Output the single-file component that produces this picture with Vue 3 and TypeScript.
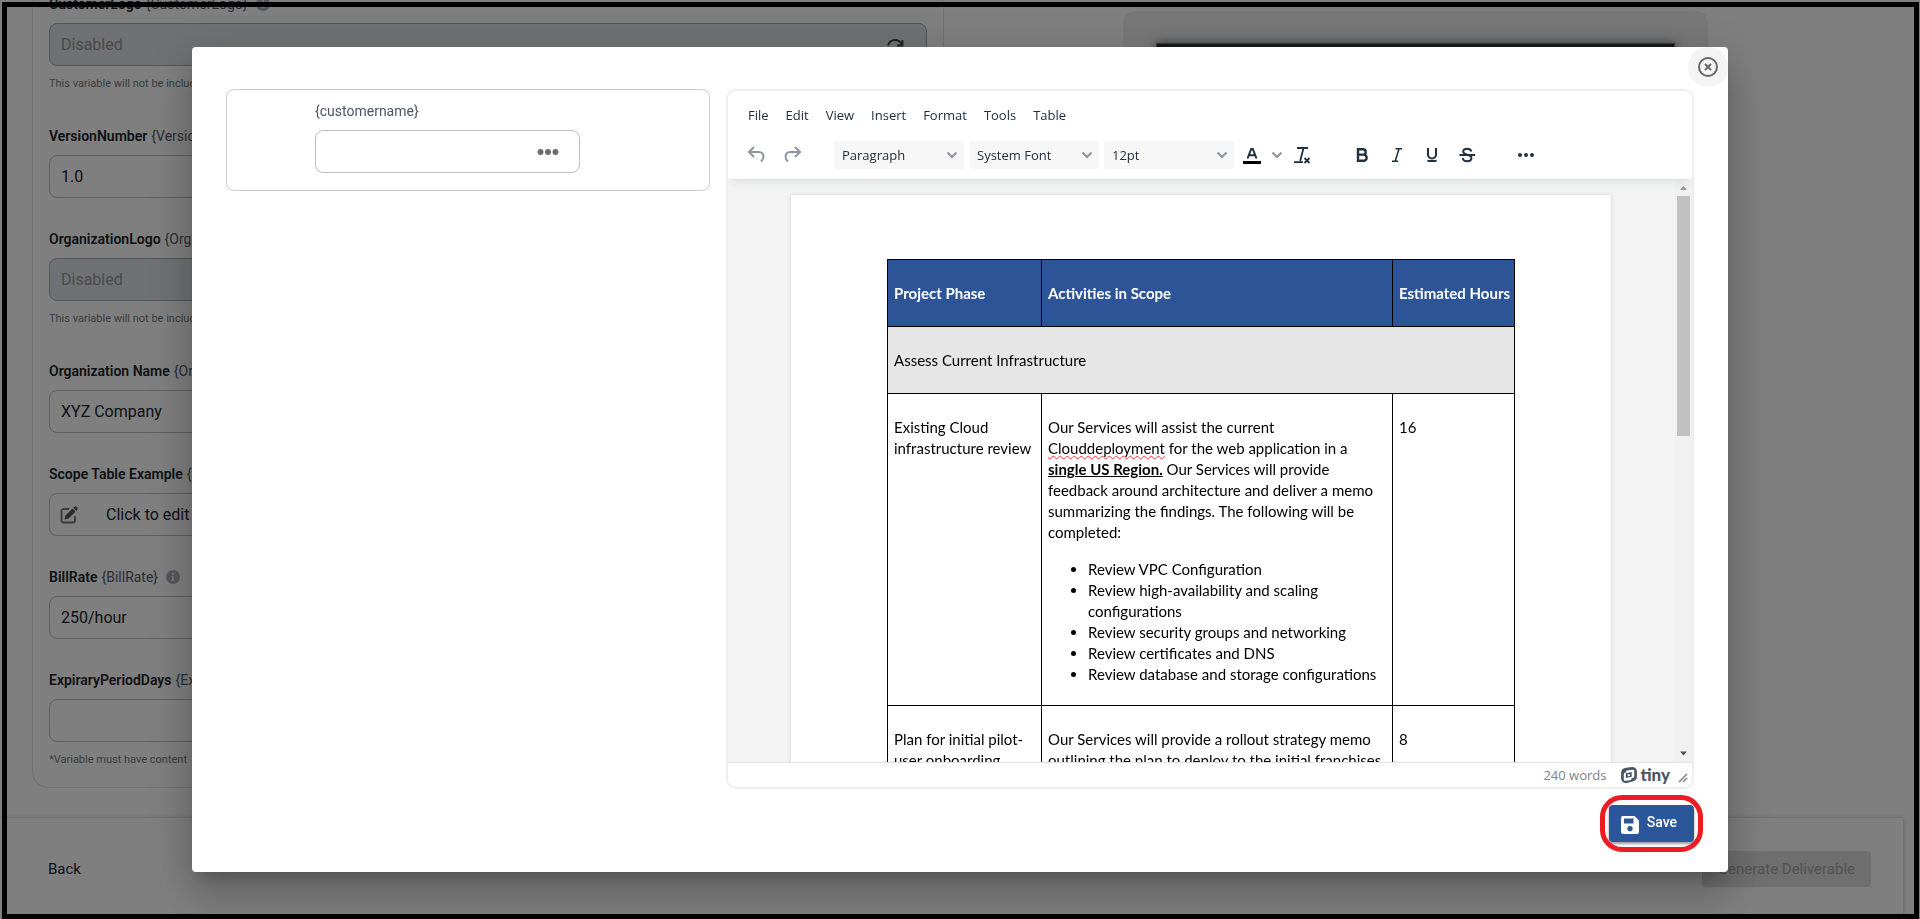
<script setup lang="ts">
import { ref } from 'vue'

interface Field {
  id: string
  name: string
  token: string
  value: string
  info?: boolean
  disabled?: boolean
  editor?: boolean
  note?: string
}

const unused = 'This variable will not be included in the document'

const fields = ref<Field[]>([
  { id: 'customer-logo', name: 'CustomerLogo', token: '{CustomerLogo}', value: 'Disabled', disabled: true, info: true, note: unused },
  { id: 'version', name: 'VersionNumber', token: '{VersionNumber}', value: '1.0' },
  { id: 'org-logo', name: 'OrganizationLogo', token: '{OrganizationLogo}', value: 'Disabled', disabled: true, note: unused },
  { id: 'org-name', name: 'Organization Name', token: '{OrganizationName}', value: 'XYZ Company' },
  { id: 'scope', name: 'Scope Table Example', token: '{ScopeTable}', value: 'Click to edit', editor: true },
  { id: 'bill-rate', name: 'BillRate', token: '{BillRate}', value: '250/hour', info: true },
  { id: 'expiry', name: 'ExpiraryPeriodDays', token: '{ExpiraryPeriodDays}', value: '', note: '*Variable must have content' },
])

const customerName = ref('')
const menus = ['File', 'Edit', 'View', 'Insert', 'Format', 'Tools', 'Table']
const selects = [
  { label: 'Block format', value: 'Paragraph' },
  { label: 'Font', value: 'System Font' },
  { label: 'Font size', value: '12pt' },
]
const reviews = [
  'Review VPC Configuration',
  'Review high-availability and scaling configurations',
  'Review security groups and networking',
  'Review certificates and DNS',
  'Review database and storage configurations',
]
</script>

<template>
  <div class="page">
    <main class="content">
      <form class="card">
        <div v-for="f in fields" :key="f.id" class="field">
          <label class="field-label" :for="f.id">
            <b>{{ f.name }}</b> <span>{{ f.token }}</span>
            <svg v-if="f.info" class="info" viewBox="0 0 14 14" aria-hidden="true">
              <circle cx="7" cy="7" r="7" fill="#a9b1ba" />
              <path d="M6 3h2v2H6zM5 6h3v4h1v1H5v-1h1V7H5z" fill="#e4e7ea" />
            </svg>
          </label>
          <button v-if="f.editor" :id="f.id" type="button" class="box edit-box">
            <svg width="18" height="18" viewBox="0 0 18 18" aria-hidden="true">
              <path d="M9 3H3.500a2 2 0 0 0-2 2v9.500a2 2 0 0 0 2 2H13a2 2 0 0 0 2-2V10" fill="none" stroke="#777" stroke-width="1.800" />
              <path d="M4.500 13.500l1-4 7-7 3 3-7 7zM13.300 1.700l1-1a1.500 1.500 0 0 1 2 0l1 1a1.500 1.500 0 0 1 0 2l-1 1z" fill="#555" />
            </svg>
            <span>{{ f.value }}</span>
          </button>
          <div v-else class="box" :class="{ off: f.disabled }">
            <input :id="f.id" v-model="f.value" type="text" :disabled="f.disabled" />
            <svg v-if="f.disabled" class="redo" width="18" height="18" viewBox="0 0 18 18" aria-hidden="true">
              <path d="M2 9.500C3 6 6 4 9 4c3 0 5.500 1.500 7 4.500M16.500 4v5.500H11" fill="none" stroke="#444" stroke-width="1.800" />
            </svg>
          </div>
          <p v-if="f.note" class="note">{{ f.note }}</p>
        </div>
      </form>
      <section class="preview"><div class="sheet"></div></section>
    </main>
    <footer class="footer">
      <button type="button">Back</button>
      <button type="button" class="generate" disabled>Generate Deliverable</button>
    </footer>
  </div>

  <div class="overlay">
    <div class="modal" role="dialog" aria-modal="true" aria-label="Edit variable content">
      <button type="button" class="close" aria-label="Close">
        <svg width="20" height="20" viewBox="0 0 20 20" aria-hidden="true">
          <circle cx="10" cy="10" r="9" fill="none" stroke="#666" stroke-width="2" />
          <path d="M7 7l6 6M13 7l-6 6" stroke="#666" stroke-width="2" />
        </svg>
      </button>

      <div class="columns">
        <section class="variables">
          <div class="variable">
            <label for="customername">{customername}</label>
            <div class="box">
              <input id="customername" v-model="customerName" type="text" />
              <button type="button" class="more" aria-label="More options">
                <svg width="22" height="6" viewBox="0 0 22 6" aria-hidden="true">
                  <g fill="#6e6e6e"><circle cx="3.500" cy="3" r="3" /><circle cx="11" cy="3" r="3" /><circle cx="18.500" cy="3" r="3" /></g>
                </svg>
              </button>
            </div>
          </div>
        </section>

        <section class="editor">
          <header class="tools">
            <nav class="menubar">
              <button v-for="m in menus" :key="m" type="button">{{ m }}</button>
            </nav>
            <div class="toolbar">
              <button type="button" class="tool history" aria-label="Undo">
                <svg width="24" height="24" viewBox="0 0 24 24"><path d="M9 4L4 9l5 5M4.500 9H14a4.500 4.500 0 0 1 4.500 4.500c0 2-.8 3.500-2.500 5" fill="none" stroke="currentColor" stroke-width="2" /></svg>
              </button>
              <button type="button" class="tool history redo-tool" aria-label="Redo">
                <svg width="24" height="24" viewBox="0 0 24 24"><path d="M14 4l5 5-5 5M18.500 9H9a4.500 4.500 0 0 0-4.500 4.500c0 2 .8 3.500 2.500 5" fill="none" stroke="currentColor" stroke-width="2" /></svg>
              </button>
              <div class="selects">
                <div v-for="s in selects" :key="s.label" class="select">
                  <select :aria-label="s.label"><option>{{ s.value }}</option></select>
                  <svg width="12" height="8" viewBox="0 0 12 8" aria-hidden="true"><path d="M1.500 1.500L6 6l4.500-4.500" fill="none" stroke="#8e959e" stroke-width="2" /></svg>
                </div>
              </div>
              <button type="button" class="tool" aria-label="Text color">
                <svg width="24" height="24" viewBox="0 0 24 24"><path d="M3 18h18v3H3z" fill="#000" /><path d="M7.500 15.500L11.200 6h1.600l3.700 9.500M9 12.300h6" fill="none" stroke="currentColor" stroke-width="2" /></svg>
              </button>
              <button type="button" class="arrow" aria-label="Text color menu">
                <svg width="12" height="8" viewBox="0 0 12 8"><path d="M1.500 1.500L6 6l4.500-4.500" fill="none" stroke="#8e959e" stroke-width="2" /></svg>
              </button>
              <button type="button" class="tool" aria-label="Clear formatting">
                <svg width="24" height="24" viewBox="0 0 24 24"><path d="M7 5h11M13.500 5l-3.300 13M4 19.200h9M14.500 15l5 5M19.500 15l-5 5" fill="none" stroke="currentColor" stroke-width="1.800" /></svg>
              </button>
              <div class="styles">
                <button type="button" class="tool" aria-label="Bold">
                  <svg width="24" height="24" viewBox="0 0 24 24"><path d="M8 6.200h5a2.700 2.700 0 0 1 0 5.400H8zM8 11.600h5.600a3 3 0 0 1 0 6.100H8z" fill="none" stroke="currentColor" stroke-width="2.400" /></svg>
                </button>
                <button type="button" class="tool" aria-label="Italic">
                  <svg width="24" height="24" viewBox="0 0 24 24"><path d="M10.500 5.700H17M7 18.300h6M14 5.700l-3.800 12.600" fill="none" stroke="currentColor" stroke-width="1.500" /></svg>
                </button>
                <button type="button" class="tool" aria-label="Underline">
                  <svg width="24" height="24" viewBox="0 0 24 24"><path d="M8 5v6.500a4 4 0 0 0 8 0V5M7.500 18h9" fill="none" stroke="currentColor" stroke-width="2" /></svg>
                </button>
                <button type="button" class="tool" aria-label="Strikethrough">
                  <svg width="24" height="24" viewBox="0 0 24 24"><path d="M16.200 8.500C16 6.500 14.300 5.700 12.200 5.700c-2.500 0-4 1.100-4 2.900 0 1.700 1.500 2.500 4 3.100 2.700.6 4.200 1.400 4.200 3.300 0 2-1.700 3.200-4.200 3.200-2.700 0-4.300-1.100-4.400-3.200M4.500 12h15.500" fill="none" stroke="currentColor" stroke-width="2" /></svg>
                </button>
              </div>
              <button type="button" class="tool" aria-label="More tools">
                <svg width="24" height="24" viewBox="0 0 24 24"><g fill="currentColor"><circle cx="6" cy="12" r="2" /><circle cx="12" cy="12" r="2" /><circle cx="18" cy="12" r="2" /></g></svg>
              </button>
            </div>
          </header>

          <div class="canvas">
            <div class="viewport">
              <article class="paper">
                <table class="scope">
                  <colgroup><col class="c1" /><col class="c2" /><col class="c3" /></colgroup>
                  <thead>
                    <tr><th>Project Phase</th><th>Activities in Scope</th><th>Estimated Hours</th></tr>
                  </thead>
                  <tbody>
                    <tr class="phase"><td colspan="3"><p>Assess Current Infrastructure</p></td></tr>
                    <tr>
                      <td><p>Existing Cloud infrastructure review</p></td>
                      <td>
                        <p>Our Services will assist the current <span class="typo">Clouddeployment</span> for the web application in a <b><u>single US Region.</u></b> Our Services will provide feedback around architecture and deliver a memo summarizing the findings. The following will be completed:</p>
                        <ul><li v-for="r in reviews" :key="r">{{ r }}</li></ul>
                      </td>
                      <td><p>16</p></td>
                    </tr>
                    <tr>
                      <td><p>Plan for initial pilot-user onboarding</p></td>
                      <td><p>Our Services will provide a rollout strategy memo outlining the plan to deploy to the initial franchises</p></td>
                      <td><p>8</p></td>
                    </tr>
                  </tbody>
                </table>
              </article>
            </div>
            <div class="scrollbar" aria-hidden="true">
              <svg width="17" height="17" viewBox="0 0 17 17"><path d="M5 11l3.500-4 3.500 4z" fill="#9a9a9a" /></svg>
              <div class="thumb"></div>
              <svg width="17" height="17" viewBox="0 0 17 17"><path d="M5 6.500l3.500 4 3.500-4z" fill="#505050" /></svg>
            </div>
          </div>

          <footer class="status">
            <span class="words">240 words</span>
            <span class="brand">
              <svg width="16" height="16" viewBox="0 0 16 16" aria-hidden="true">
                <path fill-rule="evenodd" d="M5 .8l6-.7a4.500 4.500 0 0 1 4.900 4v5.400a5 5 0 0 1-4.200 5L5.500 15.900A4.500 4.500 0 0 1 .1 11.500V6A5 5 0 0 1 5 .8zM6 3.500L11.500 2.700a1.500 1.500 0 0 1 1.800 1.500V9a2 2 0 0 1-1.500 2l-1.300.3v.5a1.500 1.500 0 0 1-1.300 1.400l-4.600.6a1.500 1.500 0 0 1-1.800-1.500V7.500a2 2 0 0 1 1.500-2L5 5.300v-.6A1.300 1.300 0 0 1 6 3.500z" fill="#4a5562" />
                <path fill-rule="evenodd" d="M4.800 6.200l5.900-1.200v4.700l-5.900 1.200zM6.800 7l2 .2V9l-2 .2z" fill="#4a5562" />
              </svg>
              <b>tiny</b>
            </span>
            <svg class="grip" width="10" height="10" viewBox="0 0 10 10" aria-hidden="true"><path d="M1 9l8-8M5 9l4-4" stroke="#7a828c" stroke-width="1.500" /></svg>
          </footer>
        </section>
      </div>

      <div class="actions">
        <div class="save-wrap">
          <button type="button" class="save">
            <svg width="18" height="18" viewBox="0 0 18 18" aria-hidden="true">
              <path fill-rule="evenodd" d="M2 0h11.500L18 4.500V16a2 2 0 0 1-2 2H2a2 2 0 0 1-2-2V2a2 2 0 0 1 2-2zM3 2.500v5h9.500v-5zM9 10a2.700 2.700 0 1 0 .01 0z" fill="#fff" />
            </svg>
            <span>Save</span>
          </button>
        </div>
      </div>
    </div>
  </div>
  <div class="frame" aria-hidden="true"></div>
</template>

<style>
html,
body {
  margin: 0;
  overflow: hidden;
}
</style>

<style scoped>
* {
  box-sizing: border-box;
}
button,
input,
select {
  font: inherit;
  color: inherit;
  margin: 0;
  padding: 0;
  border: 0;
  background: none;
  outline: none;
}
svg {
  display: block;
  flex: none;
}
.page {
  height: 100vh;
  display: flex;
  flex-direction: column;
  font-family: Roboto, "Liberation Sans", sans-serif;
  color: #212529;
  background: #fff;
}
.content {
  flex: 1;
  min-height: 0;
  display: flex;
  align-items: flex-start;
  padding: 0 212px 0 32px;
}
.card {
  flex: 0 1 912px;
  margin: -16px 179px 0 0;
  padding: 0 16px 16px;
  border: 1px solid #e0e0e0;
  border-radius: 16px;
}
.field + .field {
  margin-top: 22px;
}
.field-label {
  display: flex;
  align-items: center;
  gap: 4px;
  height: 38px;
  font-size: 14px;
}
.field-label b {
  font-weight: 600;
}
.field-label span {
  color: #555c66;
}
.info {
  width: 14px;
  height: 14px;
  margin-left: 4px;
}
.box {
  display: flex;
  align-items: center;
  width: 100%;
  height: 43px;
  border: 1px solid #bfbfbf;
  border-radius: 8px;
  font-size: 16px;
}
.box input {
  flex: 1;
  min-width: 0;
  padding: 0 11px;
}
.box.off {
  background: #dfe3e8;
  border-color: #aaa;
}
.box.off input {
  color: #969696;
}
.redo {
  margin-right: 22px;
}
.edit-box {
  gap: 28px;
  padding: 0 10px;
}
.note {
  height: 20px;
  margin: 9px 0 0;
  font-size: 11px;
  line-height: 18px;
  color: #747a82;
}
.preview {
  flex: 1;
  align-self: stretch;
  margin-top: 11px;
  padding: 32px 33px 0;
  background: #f0f0f0;
  border-radius: 12px;
}
.sheet {
  height: 100%;
  background: #2d3034;
  border: 1px solid #777;
  box-shadow: 0 0 10px rgba(0, 0, 0, 0.5);
}
.footer {
  flex: none;
  display: flex;
  align-items: center;
  justify-content: space-between;
  height: 101px;
  margin-right: 17px;
  padding: 0 32px 0 48px;
  font-size: 15px;
  background: #fff;
  box-shadow: 0 0 4px rgba(0, 0, 0, 0.25);
}
.generate {
  height: 36px;
  padding: 0 16px;
  border-radius: 4px;
  background: #dedede;
  color: #a6a6a6;
}
.overlay {
  position: fixed;
  inset: 0;
  display: flex;
  align-items: center;
  justify-content: center;
  background: rgba(0, 0, 0, 0.5);
}
.frame {
  position: fixed;
  inset: 2px 1px 0 2px;
  border: 5px solid #000;
  pointer-events: none;
}
.modal {
  position: relative;
  display: flex;
  flex-direction: column;
  width: 80vw;
  height: calc(100vh - 94px);
  padding: 42px 34px 30px;
  background: #fff;
  border-radius: 4px;
  box-shadow: 0 11px 15px -7px rgba(0, 0, 0, 0.2), 0 24px 38px 3px rgba(0, 0, 0, 0.14), 0 9px 46px 8px rgba(0, 0, 0, 0.12);
  font-family: Roboto, "Liberation Sans", sans-serif;
  z-index: 1;
}
.close {
  position: absolute;
  top: 0;
  right: 0;
  display: flex;
  align-items: center;
  justify-content: center;
  width: 40px;
  height: 40px;
  border-radius: 50%;
  background: #f4f4f4;
}
.columns {
  flex: 1;
  min-height: 0;
  display: grid;
  grid-template-columns: 1fr 2fr;
  gap: 16px;
}
.variables {
  align-self: start;
  display: flex;
  justify-content: flex-start;
  padding: 11px 88px 17px;
  border: 1px solid #ccc;
  border-radius: 8px;
}
.variable {
  width: 265px;
}
.variable label {
  display: block;
  margin-bottom: 9px;
  font-size: 14px;
  line-height: 20px;
  color: #4b5563;
}
.more {
  margin-right: 20px;
}
.editor {
  display: flex;
  flex-direction: column;
  min-height: 0;
  overflow: hidden;
  border: 2px solid #eee;
  border-radius: 10px;
  font-family: "Open Sans", "Noto Sans", sans-serif;
  font-size: 13px;
  color: #222f3e;
}
.tools {
  flex: none;
  position: relative;
  padding: 10px 12px;
  background: #fff;
  box-shadow: 0 2px 2px -2px rgba(34, 47, 62, 0.1), 0 8px 8px -4px rgba(34, 47, 62, 0.07);
}
.menubar {
  display: flex;
  gap: 1px;
}
.menubar button {
  height: 28px;
  padding: 0 8px;
}
.toolbar {
  display: flex;
  align-items: center;
  height: 40px;
  padding-top: 12px;
}
.tool {
  display: flex;
  align-items: center;
  justify-content: center;
  width: 34px;
  height: 28px;
}
.history {
  color: #8e959e;
}
.redo-tool {
  margin-left: 2px;
}
.selects {
  display: flex;
  gap: 5px;
  margin: 0 1px 0 24px;
}
.select {
  display: grid;
  align-items: center;
  width: 130px;
}
.select > * {
  grid-area: 1 / 1;
}
.select select {
  appearance: none;
  width: 100%;
  height: 28px;
  padding: 0 8px;
  background: #f7f7f7;
  border-radius: 3px;
}
.select svg {
  justify-self: end;
  margin-right: 6px;
  pointer-events: none;
}
.arrow {
  width: 16px;
  display: flex;
  justify-content: center;
}
.styles {
  display: flex;
  gap: 1px;
  margin: 0 25px 0 26px;
}
.canvas {
  flex: 1;
  min-height: 0;
  display: flex;
  background: #f3f3f3;
}
.viewport {
  flex: 1;
  overflow: hidden;
  padding: 16px 63px 0;
}
.paper {
  max-width: 820px;
  margin: 0 auto 0 0;
  padding: 64px 96px;
  background: #fff;
  box-shadow: 0 0 4px rgba(0, 0, 0, 0.15);
  font-family: Lato, "Noto Sans", sans-serif;
  font-size: 15px;
  line-height: 21px;
  color: #000;
}
.scope {
  width: 100%;
  table-layout: fixed;
  border-collapse: collapse;
}
.c1 {
  width: 154px;
}
.c3 {
  width: 122px;
}
.scope th,
.scope td {
  padding: 7px 6px 6px;
  border: 1px solid #000;
  text-align: left;
  vertical-align: top;
}
.scope th {
  height: 67px;
  vertical-align: middle;
  color: #fff;
  background: #2d5496;
  white-space: nowrap;
}
.scope p {
  margin: 16px 0;
}
.scope ul {
  margin: 16px 0 14px;
  padding-left: 40px;
}
.phase td {
  background: #e6e6e6;
}
.typo {
  text-decoration: underline wavy #f33 1px;
  text-decoration-skip-ink: none;
}
.scrollbar {
  flex: none;
  display: flex;
  flex-direction: column;
  justify-content: space-between;
  width: 17px;
  background: #f1f1f1;
}
.thumb {
  height: 240px;
  margin: 0 2px auto;
  background: #c1c1c1;
}
.status {
  flex: none;
  display: flex;
  align-items: center;
  height: 25px;
  padding: 0 4px;
  border-top: 1px solid #e3e3e3;
  background: #fff;
}
.words {
  margin-left: auto;
  color: #7a828c;
  font-size: 13px;
}
.brand {
  display: flex;
  align-items: center;
  gap: 3px;
  margin: 0 8px 0 15px;
  color: #4a5562;
  font-family: Lato, sans-serif;
  font-size: 17px;
  line-height: 20px;
}
.brand b {
  font-weight: 900;
}
.grip {
  align-self: flex-end;
  margin-bottom: 4px;
}
.actions {
  display: flex;
  justify-content: flex-end;
  margin-top: 16px;
}
.save-wrap {
  position: relative;
}
.save-wrap::after {
  content: "";
  position: absolute;
  inset: -10px -9px;
  border: 5px solid #ed1c24;
  border-radius: 22px;
  pointer-events: none;
}
.save {
  display: flex;
  align-items: center;
  gap: 8px;
  height: 37px;
  padding: 0 17px 0 12px;
  border-radius: 4px;
  background: #2b579a;
  color: #fff;
  font-size: 14px;
  font-weight: 500;
  box-shadow: 0 2px 3px rgba(0, 0, 0, 0.4);
}
.save svg {
  margin-top: 2px;
}
.save span {
  margin-bottom: 3px;
}
</style>
